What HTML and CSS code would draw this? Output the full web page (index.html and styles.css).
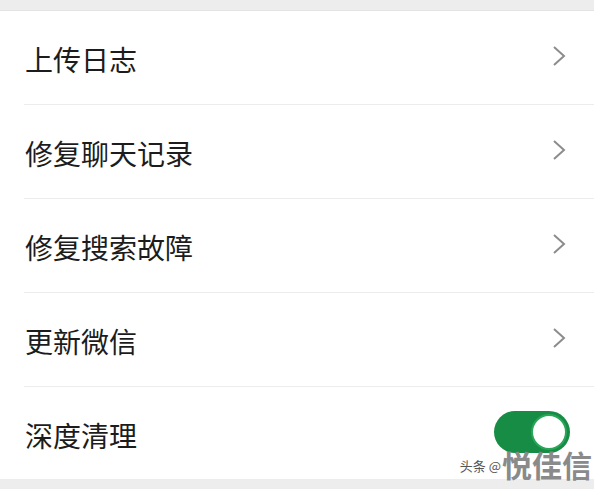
FILE: index.html
```html
<!DOCTYPE html>
<html lang="zh-CN">
<head>
  <meta charset="UTF-8">
  <meta name="viewport" content="width=device-width, initial-scale=1">
  <title>设置</title>
  <link rel="stylesheet" href="styles.css">
</head>
<body>
  <div class="page">
    <ul class="list">
      <li class="item">
        <span class="label">上传日志</span>
        <svg class="arrow" viewBox="0 0 14 22"><path d="M2 2 L12 11 L2 20" /></svg>
      </li>
      <li class="item">
        <span class="label">修复聊天记录</span>
        <svg class="arrow" viewBox="0 0 14 22"><path d="M2 2 L12 11 L2 20" /></svg>
      </li>
      <li class="item">
        <span class="label">修复搜索故障</span>
        <svg class="arrow" viewBox="0 0 14 22"><path d="M2 2 L12 11 L2 20" /></svg>
      </li>
      <li class="item">
        <span class="label">更新微信</span>
        <svg class="arrow" viewBox="0 0 14 22"><path d="M2 2 L12 11 L2 20" /></svg>
      </li>
      <li class="item last">
        <span class="label">深度清理</span>
        <span class="switch on"><span class="knob"></span></span>
      </li>
    </ul>
    <div class="watermark">
      <span class="wm-small">头条 @</span><span class="wm-big">悦佳信</span>
    </div>
  </div>
</body>
</html>
```

FILE: styles.css
```css
* {
  box-sizing: border-box;
}
body {
  margin: 0;
  background-color: #ededed;
  font-family: "Noto Sans CJK SC", "Noto Sans", sans-serif;
}
.page {
  position: relative;
  width: 594px;
  height: 489px;
  padding-top: 10px;
  overflow: hidden;
}
.list {
  list-style: none;
  margin: 0;
  padding: 0 0 0 24px;
  background: white;
  border-top: 1px solid #e4e4e4;
}
.item {
  display: flex;
  align-items: center;
  justify-content: space-between;
  height: 94px;
  padding-right: 24px;
  border-bottom: 1px solid #ececec;
}
.item.last {
  height: 92px;
  border-bottom: none;
}
.label {
  font-size: 28px;
  color: #1c1c1c;
  padding-top: 3px;
  padding-left: 1px;
}
.arrow {
  width: 14px;
  height: 22px;
  margin-right: 4px;
  margin-top: -4px;
}
.arrow path {
  fill: none;
  stroke: #8c8c8c;
  stroke-width: 2;
}
.switch {
  position: relative;
  display: block;
  width: 76px;
  height: 42px;
  border-radius: 21px;
  background: #178c44;
  margin-top: -2px;
}
.knob {
  position: absolute;
  right: 3px;
  top: 3px;
  width: 36px;
  height: 36px;
  border-radius: 50%;
  background: white;
  border: 2px solid #2aa55a;
}
.watermark {
  position: absolute;
  right: 2px;
  bottom: 8px;
  display: flex;
  align-items: flex-end;
}
.wm-small {
  font-size: 13px;
  color: #555;
  margin-right: 1px;
  margin-bottom: 6px;
}
.wm-big {
  font-size: 30px;
  font-weight: bold;
  color: #8a8a8a;
  line-height: 34px;
}
```
